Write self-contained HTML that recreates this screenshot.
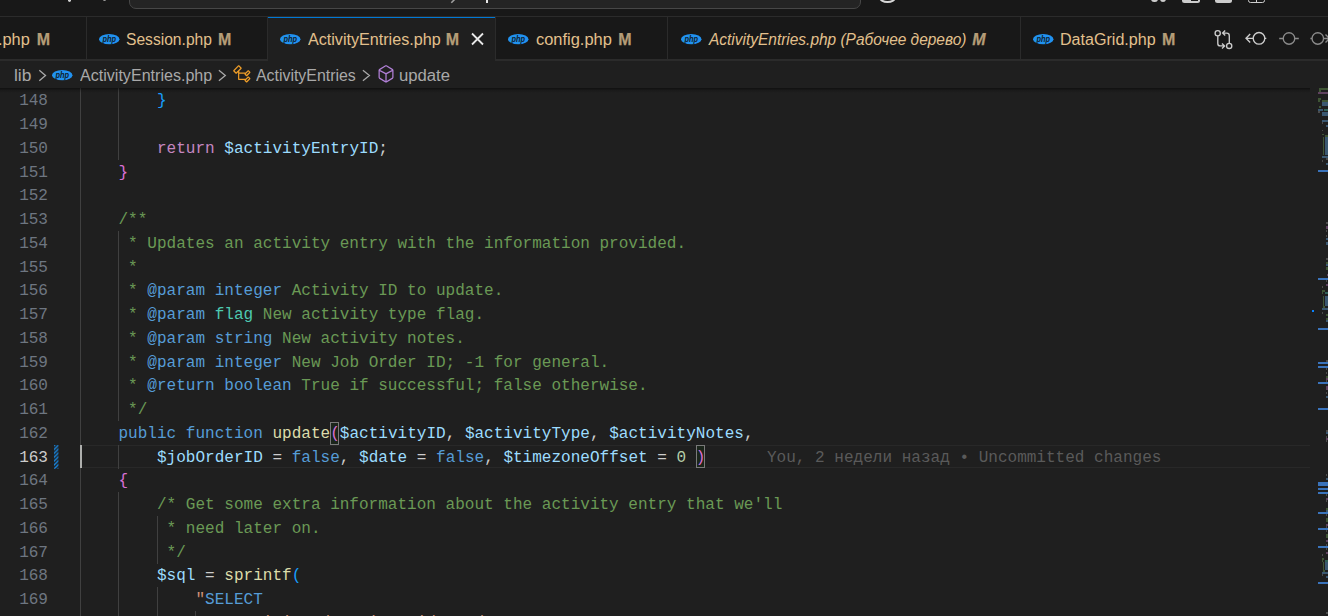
<!DOCTYPE html>
<html><head><meta charset="utf-8">
<style>
*{margin:0;padding:0;box-sizing:border-box}
html,body{width:1328px;height:616px;overflow:hidden;background:#1f1f1f}
body{position:relative;font-family:"Liberation Sans",sans-serif}
.a{position:absolute}
svg{position:absolute;overflow:visible}
.tl{position:absolute;font-size:16px;color:#e2c08d;line-height:20px;white-space:nowrap}
.tm{position:absolute;font-size:16px;font-weight:bold;-webkit-text-stroke:0.25px #b59d77;color:#b59d77;line-height:20px}

.bc{position:absolute;font-size:16px;color:#a9a9a9;line-height:20px;white-space:nowrap}
.ln{position:absolute;left:0;width:48px;text-align:right;font-family:"Liberation Mono",monospace;font-size:16.04px;line-height:23.75px;height:23.75px;color:#6e7681;white-space:pre}
.cd{position:absolute;left:80.0px;font-family:"Liberation Mono",monospace;font-size:16.04px;line-height:23.75px;height:23.75px;color:#cccccc;white-space:pre}
.k{color:#569cd6}.r{color:#c586c0}.v{color:#9cdcfe}.f{color:#dcdcaa}.c{color:#6a9955}.n{color:#b5cea8}.s{color:#ce9178}.t{color:#4ec9b0}
.b1{color:#ffd700}.b2{color:#da70d6}.b3{color:#179fff}
.g{position:absolute;width:1.25px;background:#404040}
.mm{position:absolute}.mc{position:absolute;opacity:0.6}
</style></head><body>

<div class="a" style="left:0;top:0;width:1328px;height:16px;background:#181818"></div>
<div class="a" style="left:0;top:16px;width:1328px;height:1.25px;background:#2b2b2b"></div>
<div class="a" style="left:129px;top:-22px;width:732px;height:31px;background:#242424;border:1.25px solid #474747;border-radius:7px"></div>
<div class="a" style="left:67.8px;top:-2px;width:3.2px;height:3.6px;border-radius:50%;background:#d0d0d0"></div>
<div class="a" style="left:103px;top:-2px;width:3px;height:3.4px;border-radius:50%;background:#9a9a9a"></div>
<svg style="left:0;top:0" width="1" height="1"><path d="M451.3 2.8 L454.6 -0.5" stroke="#a0a0a0" stroke-width="1.6"/></svg>
<div class="a" style="left:486px;top:0;width:2.2px;height:3px;background:#e8e8e8"></div>
<div class="a" style="left:878.5px;top:-8px;width:17.5px;height:11px;border-radius:50%;border:2px solid #d8d8d8"></div>
<div class="a" style="left:1151px;top:-4px;width:6.5px;height:6px;border-radius:3px;background:#cccccc"></div>
<div class="a" style="left:1159.5px;top:-4px;width:6.5px;height:6px;border-radius:3px;background:#cccccc"></div>
<div class="a" style="left:1182px;top:-8px;width:17.8px;height:10.8px;border-radius:2.5px;background:#cccccc"></div>
<div class="a" style="left:1190.5px;top:-8px;width:7px;height:9px;background:#181818"></div>
<div class="a" style="left:1214.5px;top:-8px;width:17.5px;height:10.8px;border-radius:2.5px;background:#cccccc"></div>
<div class="a" style="left:1247.5px;top:-8px;width:17.5px;height:10.8px;border-radius:2.5px;border:1.5px solid #cccccc"></div>
<div class="a" style="left:1255.5px;top:-8px;width:1.5px;height:10px;background:#cccccc"></div>
<div class="a" style="left:0;top:17.25px;width:1328px;height:42.5px;background:#181818"></div>
<div class="a" style="left:0;top:59.1px;width:1328px;height:1.9px;background:#2b2b2b"></div>
<div class="a" style="left:268px;top:17px;width:227px;height:43.5px;background:#1f1f1f"></div>
<div class="a" style="left:268px;top:16.5px;width:227px;height:1.3px;background:#0078d4"></div>
<div class="a" style="left:86px;top:17px;width:1.25px;height:42.5px;background:#2b2b2b"></div>
<div class="a" style="left:267px;top:17px;width:1.25px;height:42.5px;background:#2b2b2b"></div>
<div class="a" style="left:495px;top:17px;width:1.25px;height:42.5px;background:#2b2b2b"></div>
<div class="a" style="left:667px;top:17px;width:1.25px;height:42.5px;background:#2b2b2b"></div>
<div class="a" style="left:1020px;top:17px;width:1.25px;height:42.5px;background:#2b2b2b"></div>
<div class="tl" style="left:-2.22px;top:30px;transform:scale(1.0200,1.0);transform-origin:0 0;">.php</div>
<div class="tm" style="left:36.80px;top:29.5px;transform:scale(1.0000,1.0);transform-origin:0 0;">M</div>
<svg style="left:98.8px;top:33.8px" width="20.5" height="10.3" viewBox="0 0 20.5 10.3"><ellipse cx="10.25" cy="5.15" rx="10.25" ry="5.15" fill="#2192f0"/><text x="3.4" y="7.6" textLength="13.6" lengthAdjust="spacingAndGlyphs" font-family="Liberation Sans" font-weight="bold" font-style="italic" font-size="8.6" fill="#0f1d2c">php</text></svg>
<div class="tl" style="left:125.82px;top:30px;transform:scale(0.9759,1.0);transform-origin:0 0;">Session.php</div>
<div class="tm" style="left:217.90px;top:29.5px;transform:scale(1.0000,1.0);transform-origin:0 0;">M</div>
<svg style="left:279.9px;top:33.8px" width="20.5" height="10.3" viewBox="0 0 20.5 10.3"><ellipse cx="10.25" cy="5.15" rx="10.25" ry="5.15" fill="#2192f0"/><text x="3.4" y="7.6" textLength="13.6" lengthAdjust="spacingAndGlyphs" font-family="Liberation Sans" font-weight="bold" font-style="italic" font-size="8.6" fill="#0f1d2c">php</text></svg>
<div class="tl" style="left:308.00px;top:30px;transform:scale(1.0076,1.0);transform-origin:0 0;">ActivityEntries.php</div>
<div class="tm" style="left:445.80px;top:29.5px;transform:scale(1.0000,1.0);transform-origin:0 0;">M</div>
<svg style="left:507.8px;top:33.8px" width="20.5" height="10.3" viewBox="0 0 20.5 10.3"><ellipse cx="10.25" cy="5.15" rx="10.25" ry="5.15" fill="#2192f0"/><text x="3.4" y="7.6" textLength="13.6" lengthAdjust="spacingAndGlyphs" font-family="Liberation Sans" font-weight="bold" font-style="italic" font-size="8.6" fill="#0f1d2c">php</text></svg>
<div class="tl" style="left:536.00px;top:30px;transform:scale(1.0270,1.0);transform-origin:0 0;">config.php</div>
<div class="tm" style="left:618.20px;top:29.5px;transform:scale(1.0000,1.0);transform-origin:0 0;">M</div>
<svg style="left:680.9px;top:33.8px" width="20.5" height="10.3" viewBox="0 0 20.5 10.3"><ellipse cx="10.25" cy="5.15" rx="10.25" ry="5.15" fill="#2192f0"/><text x="3.4" y="7.6" textLength="13.6" lengthAdjust="spacingAndGlyphs" font-family="Liberation Sans" font-weight="bold" font-style="italic" font-size="8.6" fill="#0f1d2c">php</text></svg>
<div class="tl" style="left:708.97px;top:30px;transform:scale(0.9663,1.0);transform-origin:0 0;font-style:italic;">ActivityEntries.php (Рабочее дерево)</div>
<div class="tm" style="left:972.20px;top:29.5px;transform:scale(1.0000,1.0);transform-origin:0 0;font-style:italic;">M</div>
<svg style="left:1032.8px;top:33.8px" width="20.5" height="10.3" viewBox="0 0 20.5 10.3"><ellipse cx="10.25" cy="5.15" rx="10.25" ry="5.15" fill="#2192f0"/><text x="3.4" y="7.6" textLength="13.6" lengthAdjust="spacingAndGlyphs" font-family="Liberation Sans" font-weight="bold" font-style="italic" font-size="8.6" fill="#0f1d2c">php</text></svg>
<div class="tl" style="left:1060.49px;top:30px;transform:scale(1.0053,1.0);transform-origin:0 0;">DataGrid.php</div>
<div class="tm" style="left:1162.00px;top:29.5px;transform:scale(1.0000,1.0);transform-origin:0 0;">M</div>
<svg style="left:0;top:0" width="1" height="1"><path d="M472 33.5 L483 44.5 M483 33.5 L472 44.5" stroke="#e8e8e8" stroke-width="1.8"/></svg>
<svg style="left:0;top:0" width="1" height="1" fill="none" stroke-width="1.35">
<circle cx="1217.7" cy="33.2" r="2.6" stroke="#cccccc"/>
<path d="M1217.8 35.8 V43.4 Q1217.8 45.9 1220.3 45.9 H1224.6 M1222.0 43.4 L1224.6 45.9 L1222.0 48.4" stroke="#cccccc"/>
<circle cx="1229.2" cy="45.9" r="2.6" stroke="#cccccc"/>
<path d="M1229.3 43.3 V35.7 Q1229.3 33.1 1226.8 33.1 H1222.6 M1225.2 30.6 L1222.6 33.1 L1225.2 35.6" stroke="#cccccc"/>
<circle cx="1259" cy="38.3" r="5.8" stroke="#cccccc"/>
<path d="M1264.8 38.3 H1266.3 M1253.2 38.3 H1246 M1250.2 34.1 L1246 38.3 L1250.2 42.5" stroke="#cccccc"/>
<circle cx="1289" cy="38.45" r="5.75" stroke="#8b8b8b"/>
<path d="M1279.2 38.45 H1283.25 M1294.75 38.45 H1298.8" stroke="#8b8b8b"/>
<circle cx="1317.8" cy="38.45" r="5.75" stroke="#8b8b8b"/>
<path d="M1310.4 38.45 H1312.05 M1323.55 38.45 H1330 M1325.5 34.5 L1329.5 38.45 L1325.5 42.4" stroke="#8b8b8b"/>
</svg>
<div class="a" style="left:0;top:61px;width:1328px;height:27px;background:#1f1f1f"></div>
<div class="a" style="left:0;top:59.1px;width:268px;height:1.9px;background:#2b2b2b"></div>
<div class="a" style="left:495px;top:59.1px;width:833px;height:1.9px;background:#2b2b2b"></div>
<div class="bc" style="left:13.71px;top:66px;transform:scale(1.0867,1.0);transform-origin:0 0;">lib</div>
<svg style="left:51.7px;top:69.6px" width="20.5" height="10.3" viewBox="0 0 20.5 10.3"><ellipse cx="10.25" cy="5.15" rx="10.25" ry="5.15" fill="#2192f0"/><text x="3.4" y="7.6" textLength="13.6" lengthAdjust="spacingAndGlyphs" font-family="Liberation Sans" font-weight="bold" font-style="italic" font-size="8.6" fill="#0f1d2c">php</text></svg>
<div class="bc" style="left:79.50px;top:66px;transform:scale(1.0046,1.0);transform-origin:0 0;">ActivityEntries.php</div>
<div class="bc" style="left:256.00px;top:66px;transform:scale(0.9930,1.0);transform-origin:0 0;">ActivityEntries</div>
<div class="bc" style="left:398.96px;top:66px;transform:scale(1.0417,1.0);transform-origin:0 0;">update</div>
<svg style="left:0;top:0" width="1" height="1" fill="none" stroke="#a9a9a9" stroke-width="1.3">
<path d="M39.3 70.2 L45.5 75.5 L39.3 80.8 M218.9 70.2 L225.3 75.5 L218.9 80.8 M362.9 70.2 L369.4 75.5 L362.9 80.8"/>
</svg>
<svg style="left:232.25px;top:64.25px" width="20" height="20" viewBox="0 0 16 16"><path fill="#ee9d28" d="M11.34 9.71h.71l2.67-2.67v-.71L13.38 5h-.7l-1.82 1.81h-5V5.56l1.86-1.85V3l-2-2H5L1 5v.71l2 2h.71l1.14-1.15v5.79l.5.5H10v.52l1.33 1.34h.71l2.67-2.67v-.71L13.37 10h-.7l-1.86 1.85h-5v-4H10v.48l1.34 1.38zm1.69-3.65l.63.63-2 2-.63-.63 2-2zm0 5l.63.63-2 2-.63-.63 2-2zM3.35 6.65l-1.29-1.3 3.29-3.29 1.3 1.29-3.3 3.3z"/></svg>
<svg style="left:375.5px;top:64.15px" width="20" height="20" viewBox="0 0 16 16"><path fill="#b180d7" d="M13.51 4l-5-3h-1l-5 3-.49.86v6l.49.85 5 3h1l5-3 .49-.85v-6L13.51 4zm-6 9.56l-4.5-2.7V5.7l4.5 2.45v5.41zM3.27 4.7l4.74-2.84 4.74 2.84-4.74 2.59L3.27 4.7zm9.74 6.16l-4.5 2.7V8.15l4.5-2.45v5.16z"/></svg>
<div class="a" style="left:80px;top:445.30px;width:1230px;height:23.15px;border-top:1.8px solid #282828;border-bottom:1.8px solid #282828"></div>
<div class="g" style="left:80.00px;top:88.00px;height:546.90px"></div>
<div class="g" style="left:118.00px;top:88.00px;height:71.90px"></div>
<div class="g" style="left:118.00px;top:231.15px;height:190.00px"></div>
<div class="g" style="left:118.00px;top:444.90px;height:23.75px"></div>
<div class="g" style="left:118.00px;top:492.40px;height:142.50px"></div>
<div class="g" style="left:157.00px;top:516.15px;height:47.50px"></div>
<div class="g" style="left:157.00px;top:587.40px;height:47.50px"></div>
<div class="g" style="left:195.00px;top:611.15px;height:23.75px"></div>
<div class="a" style="left:330.25px;top:421.55px;width:9.22px;height:23.15px;border:1.2px solid #7a7a7a;background:rgba(0,100,0,0.1)"></div>
<div class="a" style="left:696.00px;top:445.30px;width:9.22px;height:23.15px;border:1.2px solid #7a7a7a;background:rgba(0,100,0,0.1)"></div>
<div class="ln" style="top:90.35px;">148</div>
<div class="ln" style="top:114.10px;">149</div>
<div class="ln" style="top:137.85px;">150</div>
<div class="ln" style="top:161.60px;">151</div>
<div class="ln" style="top:185.35px;">152</div>
<div class="ln" style="top:209.10px;">153</div>
<div class="ln" style="top:232.85px;">154</div>
<div class="ln" style="top:256.60px;">155</div>
<div class="ln" style="top:280.35px;">156</div>
<div class="ln" style="top:304.10px;">157</div>
<div class="ln" style="top:327.85px;">158</div>
<div class="ln" style="top:351.60px;">159</div>
<div class="ln" style="top:375.35px;">160</div>
<div class="ln" style="top:399.10px;">161</div>
<div class="ln" style="top:422.85px;">162</div>
<div class="ln" style="top:446.60px;color:#cccccc;">163</div>
<div class="ln" style="top:470.35px;">164</div>
<div class="ln" style="top:494.10px;">165</div>
<div class="ln" style="top:517.85px;">166</div>
<div class="ln" style="top:541.60px;">167</div>
<div class="ln" style="top:565.35px;">168</div>
<div class="ln" style="top:589.10px;">169</div>
<div class="ln" style="top:612.85px;">170</div>
<div class="cd" style="top:90.35px">        <span class="b3">}</span></div>
<div class="cd" style="top:114.10px"></div>
<div class="cd" style="top:137.85px">        <span class="r">return</span> <span class="v">$activityEntryID</span>;</div>
<div class="cd" style="top:161.60px">    <span class="b2">}</span></div>
<div class="cd" style="top:185.35px"></div>
<div class="cd" style="top:209.10px"><span class="c">    /**</span></div>
<div class="cd" style="top:232.85px"><span class="c">     * Updates an activity entry with the information provided.</span></div>
<div class="cd" style="top:256.60px"><span class="c">     *</span></div>
<div class="cd" style="top:280.35px"><span class="c">     * </span><span class="k">@param</span><span class="c"> </span><span class="k">integer</span><span class="c"> Activity ID to update.</span></div>
<div class="cd" style="top:304.10px"><span class="c">     * </span><span class="k">@param</span><span class="c"> </span><span class="t">flag</span><span class="c"> New activity type flag.</span></div>
<div class="cd" style="top:327.85px"><span class="c">     * </span><span class="k">@param</span><span class="c"> </span><span class="k">string</span><span class="c"> New activity notes.</span></div>
<div class="cd" style="top:351.60px"><span class="c">     * </span><span class="k">@param</span><span class="c"> </span><span class="k">integer</span><span class="c"> New Job Order ID; -1 for general.</span></div>
<div class="cd" style="top:375.35px"><span class="c">     * </span><span class="k">@return</span><span class="c"> </span><span class="k">boolean</span><span class="c"> True if successful; false otherwise.</span></div>
<div class="cd" style="top:399.10px"><span class="c">     */</span></div>
<div class="cd" style="top:422.85px">    <span class="k">public</span> <span class="k">function</span> <span class="f">update</span><span class="b2">(</span><span class="v">$activityID</span>, <span class="v">$activityType</span>, <span class="v">$activityNotes</span>,</div>
<div class="cd" style="top:446.60px">        <span class="v">$jobOrderID</span> = <span class="k">false</span>, <span class="v">$date</span> = <span class="k">false</span>, <span class="v">$timezoneOffset</span> = <span class="n">0</span> <span class="b2">)</span></div>
<div class="cd" style="top:470.35px">    <span class="b2">{</span></div>
<div class="cd" style="top:494.10px"><span class="c">        /* Get some extra information about the activity entry that we&#x27;ll</span></div>
<div class="cd" style="top:517.85px"><span class="c">         * need later on.</span></div>
<div class="cd" style="top:541.60px"><span class="c">         */</span></div>
<div class="cd" style="top:565.35px">        <span class="v">$sql</span> = <span class="f">sprintf</span><span class="b3">(</span></div>
<div class="cd" style="top:589.10px">            <span class="s">&quot;</span><span class="k">SELECT</span></div>
<div class="cd" style="top:612.15px">                <span class="s">activity.data_item_id AS dataItemID,</span></div>
<div class="cd" style="left:767px;top:446.60px;color:#5a5a5a">You, 2 недели назад • Uncommitted changes</div>
<div class="a" style="left:80px;top:445.20px;width:2.4px;height:23.25px;background:#aeafad"></div>
<svg style="left:54px;top:444.90px" width="4.4" height="23.75"><defs><pattern id="st" width="4.4" height="3.9" patternUnits="userSpaceOnUse" y="0.6"><path d="M-1 4.9 L5.4 -1.5 M-1 8.8 L5.4 2.4 M-1 1.0 L5.4 -5.4" stroke="#168ae8" stroke-width="1.35"/></pattern></defs><rect x="0" y="0" width="4.4" height="23.75" fill="url(#st)"/></svg>
<div class="a" style="left:0;top:88px;width:1310px;height:5px;background:linear-gradient(rgba(0,0,0,0.5),rgba(0,0,0,0.15) 50%,rgba(0,0,0,0))"></div>
<div class="mm" style="left:1318px;top:170.2px;width:10px;height:2.0px;background:#3a73bb"></div>
<div class="mm" style="left:1318px;top:277.9px;width:10px;height:2.0px;background:#3a73bb"></div>
<div class="mm" style="left:1318px;top:328px;width:10px;height:2px;background:#3a73bb"></div>
<div class="mm" style="left:1318px;top:362px;width:10px;height:2px;background:#3a73bb"></div>
<div class="mm" style="left:1318px;top:366px;width:10px;height:2px;background:#3a73bb"></div>
<div class="mm" style="left:1318px;top:382px;width:10px;height:2px;background:#3a73bb"></div>
<div class="mm" style="left:1318px;top:408px;width:10px;height:2px;background:#3a73bb"></div>
<div class="mm" style="left:1318px;top:488px;width:10px;height:2px;background:#3a73bb"></div>
<div class="mm" style="left:1318px;top:492px;width:10px;height:2px;background:#3a73bb"></div>
<div class="mm" style="left:1318px;top:512px;width:10px;height:2px;background:#3a73bb"></div>
<div class="mm" style="left:1318px;top:528px;width:10px;height:2px;background:#3a73bb"></div>
<div class="mm" style="left:1318px;top:546px;width:10px;height:2px;background:#3a73bb"></div>
<div class="mm" style="left:1318px;top:582px;width:10px;height:2px;background:#3a73bb"></div>
<div class="mm" style="left:1318px;top:482px;width:10px;height:4px;background:#3a73bb"></div>
<div class="mm" style="left:1311.8px;top:309.9px;width:2.4px;height:2.1px;background:#0a84ff"></div>
<div class="mc" style="left:1318.6px;top:88px;width:9.400000000000091px;height:2px;background:#557a45"></div>
<div class="mc" style="left:1318.6px;top:90px;width:2.400000000000091px;height:2px;background:#557a45"></div>
<div class="mc" style="left:1318px;top:92.3px;width:10px;height:1.7000000000000028px;background:#8a5a8a"></div>
<div class="mc" style="left:1318px;top:98px;width:3px;height:2px;background:#557a45"></div>
<div class="mc" style="left:1318px;top:100px;width:2px;height:2px;background:#557a45"></div>
<div class="mc" style="left:1322px;top:100px;width:6px;height:2px;background:#557a45"></div>
<div class="mc" style="left:1322px;top:102px;width:6px;height:4px;background:#4f7fa8"></div>
<div class="mc" style="left:1318.5px;top:106px;width:2.0px;height:2px;background:#557a45"></div>
<div class="mc" style="left:1318px;top:108.5px;width:4.5px;height:2.0px;background:#4f7fa8"></div>
<div class="mc" style="left:1324px;top:108.5px;width:4px;height:2.0px;background:#3f8f7f"></div>
<div class="mc" style="left:1318px;top:110.5px;width:1.5px;height:2.0px;background:#6a6a6a"></div>
<div class="mc" style="left:1322px;top:112px;width:6px;height:4px;background:#4f7fa8"></div>
<div class="mc" style="left:1322px;top:120px;width:6px;height:2px;background:#4f7fa8"></div>
<div class="mc" style="left:1322px;top:122px;width:1px;height:2px;background:#6a6a6a"></div>
<div class="mc" style="left:1326px;top:124.5px;width:2px;height:2.5px;background:#4f7fa8"></div>
<div class="mc" style="left:1322px;top:129.5px;width:1px;height:1.5px;background:#6a6a6a"></div>
<div class="mc" style="left:1322px;top:133.5px;width:2px;height:1.5px;background:#557a45"></div>
<div class="mc" style="left:1325px;top:135px;width:3px;height:2px;background:#557a45"></div>
<div class="mc" style="left:1325px;top:137px;width:3px;height:18px;background:#4f7fa8"></div>
<div class="mc" style="left:1323px;top:137px;width:1px;height:18px;background:#557a45"></div>
<div class="mc" style="left:1322px;top:156px;width:6px;height:2px;background:#4f7fa8"></div>
<div class="mc" style="left:1326px;top:158px;width:2px;height:2px;background:#6a6a6a"></div>
<div class="mc" style="left:1322px;top:160px;width:1px;height:2px;background:#6a6a6a"></div>
<div class="mc" style="left:1326px;top:162.5px;width:2px;height:2.0px;background:#4f7fa8"></div>
<div class="mc" style="left:1326px;top:222px;width:2px;height:2px;background:#6a6a6a"></div>
<div class="mc" style="left:1326px;top:226px;width:2px;height:3px;background:#8a5a8a"></div>
<div class="mc" style="left:1326px;top:230px;width:1px;height:2px;background:#6a6a6a"></div>
<div class="mc" style="left:1326px;top:234.5px;width:1px;height:2.0px;background:#6a6a6a"></div>
<div class="mc" style="left:1326px;top:238px;width:2px;height:2px;background:#4f7fa8"></div>
<div class="mc" style="left:1326px;top:242px;width:2px;height:3px;background:#4f7fa8"></div>
<div class="mc" style="left:1326px;top:258px;width:2px;height:2px;background:#6a6a6a"></div>
<div class="mc" style="left:1326px;top:262px;width:2px;height:2px;background:#557a45"></div>
<div class="mc" style="left:1326px;top:264px;width:2px;height:2px;background:#4f7fa8"></div>
<div class="mc" style="left:1326px;top:267px;width:2px;height:3px;background:#557a45"></div>
<div class="mc" style="left:1327px;top:274px;width:1px;height:2px;background:#8a5a8a"></div>
<div class="mc" style="left:1326px;top:280px;width:1px;height:2px;background:#6a6a6a"></div>
<div class="mc" style="left:1326px;top:284px;width:2px;height:2px;background:#8a5a8a"></div>
<div class="mc" style="left:1322px;top:286px;width:1px;height:2px;background:#6a6a6a"></div>
<div class="mc" style="left:1322px;top:290px;width:3px;height:2px;background:#557a45"></div>
<div class="mc" style="left:1322px;top:292px;width:1px;height:2px;background:#557a45"></div>
<div class="mc" style="left:1325px;top:292px;width:3px;height:2px;background:#3f8f7f"></div>
<div class="mc" style="left:1325px;top:296px;width:3px;height:10px;background:#4f7fa8"></div>
<div class="mc" style="left:1323px;top:296px;width:1px;height:10px;background:#557a45"></div>
<div class="mc" style="left:1323px;top:306px;width:2px;height:2px;background:#557a45"></div>
<div class="mc" style="left:1322px;top:308px;width:6px;height:2px;background:#4f7fa8"></div>
<div class="mc" style="left:1322px;top:312px;width:1px;height:2px;background:#6a6a6a"></div>
<div class="mc" style="left:1326px;top:314px;width:2px;height:2px;background:#557a45"></div>
<div class="mc" style="left:1326px;top:318px;width:2px;height:2px;background:#557a45"></div>
<div class="mc" style="left:1326px;top:320px;width:2px;height:2px;background:#4f7fa8"></div>
<div class="mc" style="left:1326px;top:360px;width:2px;height:2px;background:#6a6a6a"></div>
<div class="mc" style="left:1326px;top:368px;width:1px;height:2px;background:#6a6a6a"></div>
<div class="mc" style="left:1326px;top:372px;width:1px;height:2px;background:#6a6a6a"></div>
<div class="mc" style="left:1326px;top:376px;width:2px;height:2px;background:#557a45"></div>
<div class="mc" style="left:1326px;top:378px;width:2px;height:2px;background:#8a5a8a"></div>
<div class="mc" style="left:1326px;top:380px;width:1px;height:2px;background:#6a6a6a"></div>
<div class="mc" style="left:1326px;top:386px;width:2px;height:4px;background:#8a5a8a"></div>
<div class="mc" style="left:1326px;top:392px;width:1px;height:2px;background:#6a6a6a"></div>
<div class="mc" style="left:1326px;top:396px;width:2px;height:2px;background:#4f7fa8"></div>
<div class="mc" style="left:1326px;top:430px;width:2px;height:2px;background:#6a6a6a"></div>
<div class="mc" style="left:1326px;top:432px;width:2px;height:2px;background:#4f7fa8"></div>
<div class="mc" style="left:1326px;top:436px;width:1px;height:2px;background:#6a6a6a"></div>
<div class="mc" style="left:1326px;top:438px;width:2px;height:2px;background:#8a5a8a"></div>
<div class="mc" style="left:1326px;top:440px;width:1px;height:2px;background:#6a6a6a"></div>
<div class="mc" style="left:1326px;top:474px;width:1px;height:2px;background:#6a6a6a"></div>
<div class="mc" style="left:1326px;top:478px;width:2px;height:2px;background:#4f7fa8"></div>
<div class="mc" style="left:1326px;top:494px;width:1px;height:2px;background:#6a6a6a"></div>
<div class="mc" style="left:1326px;top:498px;width:2px;height:2px;background:#8a5a8a"></div>
<div class="mc" style="left:1326px;top:500px;width:1px;height:2px;background:#6a6a6a"></div>
<div class="mc" style="left:1326px;top:508px;width:2px;height:2px;background:#557a45"></div>
<div class="mc" style="left:1326px;top:510px;width:2px;height:2px;background:#4f7fa8"></div>
<div class="mc" style="left:1326px;top:514px;width:1px;height:2px;background:#6a6a6a"></div>
<div class="mc" style="left:1326px;top:518px;width:2px;height:4px;background:#557a45"></div>
<div class="mc" style="left:1326px;top:524px;width:2px;height:2px;background:#8a5a8a"></div>
<div class="mc" style="left:1326px;top:526px;width:1px;height:2px;background:#6a6a6a"></div>
<div class="mc" style="left:1326px;top:530px;width:1px;height:2px;background:#6a6a6a"></div>
<div class="mc" style="left:1326px;top:534px;width:2px;height:4px;background:#557a45"></div>
<div class="mc" style="left:1326px;top:540px;width:2px;height:2px;background:#8a5a8a"></div>
<div class="mc" style="left:1326px;top:544px;width:1px;height:2px;background:#6a6a6a"></div>
<div class="mc" style="left:1326px;top:548px;width:1px;height:2px;background:#6a6a6a"></div>
<div class="mc" style="left:1326px;top:552px;width:2px;height:2px;background:#8a5a8a"></div>
<div class="mc" style="left:1322px;top:554px;width:1px;height:2px;background:#6a6a6a"></div>
<div class="mc" style="left:1322px;top:558px;width:2px;height:2px;background:#557a45"></div>
<div class="mc" style="left:1322px;top:560px;width:1px;height:2px;background:#557a45"></div>
<div class="mc" style="left:1325px;top:560px;width:3px;height:2px;background:#3f8f7f"></div>
<div class="mc" style="left:1325px;top:562px;width:3px;height:8px;background:#4f7fa8"></div>
<div class="mc" style="left:1323px;top:562px;width:1px;height:8px;background:#557a45"></div>
<div class="mc" style="left:1323px;top:570px;width:2px;height:2px;background:#557a45"></div>
<div class="mc" style="left:1322px;top:572px;width:6px;height:2px;background:#4f7fa8"></div>
<div class="mc" style="left:1322px;top:574px;width:1px;height:2px;background:#6a6a6a"></div>
<div class="mc" style="left:1326px;top:576px;width:2px;height:2px;background:#4f7fa8"></div>
<div class="mc" style="left:1326px;top:612px;width:2px;height:2px;background:#6a6a6a"></div>
</body></html>
